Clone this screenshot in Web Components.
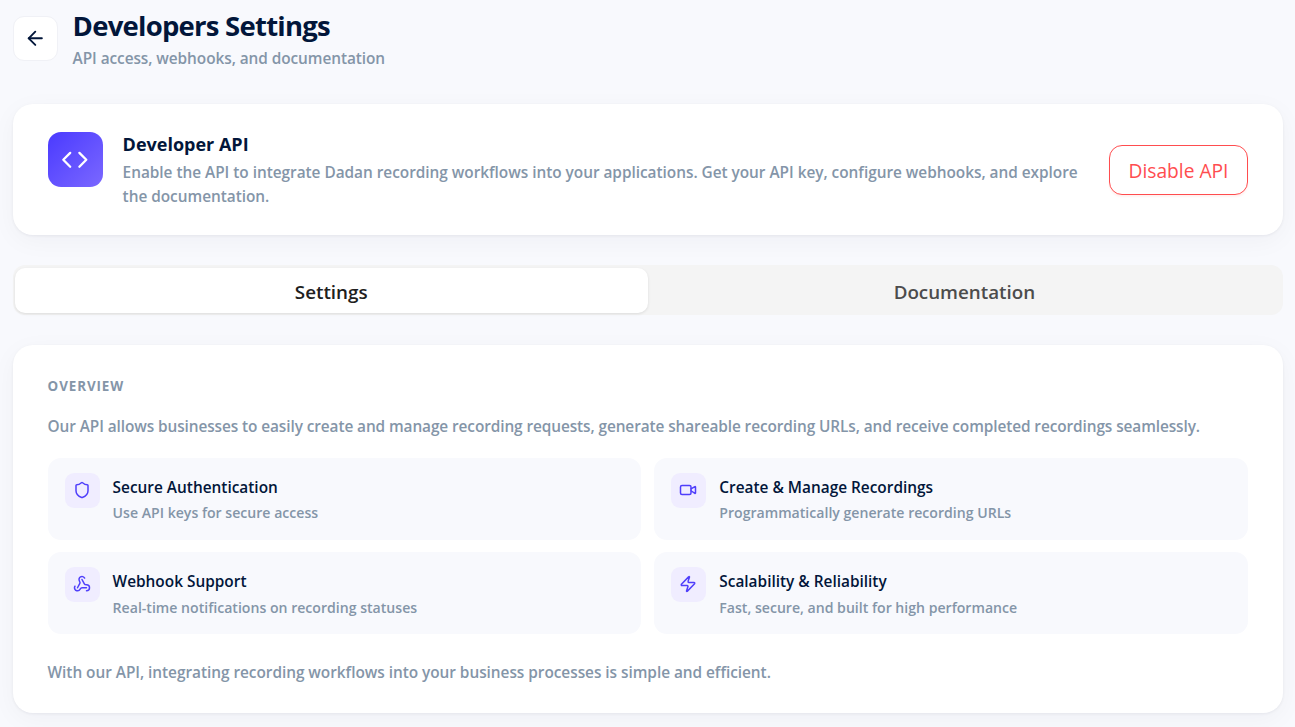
<!DOCTYPE html>
<html lang="en">
<head>
<meta charset="utf-8">
<title>Developers Settings</title>
<style>
  html, body {
    margin: 0;
    height: 100%;
    overflow: hidden;
    background: #f8f9fd;
  }

  body {
    --ink: #02163a;
    --muted: #8495a8;
    --accent: #4f3ffb;
    --danger: #ff4d4f;
    font-family: "Open Sans", "Noto Sans", sans-serif;
    color: var(--ink);
  }
</style>
</head>
<body>
<developer-settings></developer-settings>

<script>
const ICONS = {
  back: '<path d="m12 19-7-7 7-7"/><path d="M19 12H5"/>',
  code: '<path d="m16 18 6-6-6-6"/><path d="m8 6-6 6 6 6"/>',
  shield: '<path d="M20 13c0 5-3.5 7.5-7.66 8.95a1 1 0 0 1-.67-.01C7.5 20.5 4 18 4 13V6a1 1 0 0 1 1-1c2 0 4.5-1.2 6.24-2.72a1.17 1.17 0 0 1 1.52 0C14.51 3.81 17 5 19 5a1 1 0 0 1 1 1z"/>',
  video: '<path d="m16 13 5.223 3.482a.5.5 0 0 0 .777-.416V7.87a.5.5 0 0 0-.752-.432L16 10.5"/><rect x="2" y="6" width="14" height="12" rx="2"/>',
  webhook: '<path d="M18 16.98h-5.99c-1.1 0-1.95.94-2.48 1.9A4 4 0 0 1 2 17c.01-.7.2-1.4.57-2"/><path d="m6 17 3.13-5.78c.53-.97.1-2.18-.5-3.1a4 4 0 1 1 6.89-4.06"/><path d="m12 6 3.13 5.73C15.66 12.7 16.9 13 18 13a4 4 0 0 1 0 8"/>',
  zap: '<path d="M4 14a1 1 0 0 1-.78-1.63l9.9-10.2a.5.5 0 0 1 .86.46l-1.92 6.02A1 1 0 0 0 13 10h7a1 1 0 0 1 .78 1.63l-9.9 10.2a.5.5 0 0 1-.86-.46l1.92-6.02A1 1 0 0 0 11 14z"/>',
};

class UiIcon extends HTMLElement {
  connectedCallback() {
    this.attachShadow({ mode: "open" }).innerHTML = `
      <style>
        :host {
          display: block;
          flex: none;
          width: var(--icon-size, 18px);
          height: var(--icon-size, 18px);
        }

        svg {
          display: block;
          width: 100%;
          height: 100%;
        }
      </style>
      <svg viewBox="0 0 24 24" fill="none" stroke="currentColor" stroke-width="2"
        stroke-linecap="round" stroke-linejoin="round">${ICONS[this.getAttribute("name")]}</svg>
    `;
  }
}

class PageHeader extends HTMLElement {
  connectedCallback() {
    this.attachShadow({ mode: "open" }).innerHTML = `
      <style>
        :host {
          display: flex;
          gap: 15px;
          height: 96px;
          padding-top: 8px;
        }

        button {
          display: grid;
          place-items: center;
          box-sizing: border-box;
          width: 45px;
          height: 45px;
          margin: 8px 0 0;
          padding: 0;
          color: var(--ink);
          background: #fff;
          border: 1px solid #f0f1f6;
          border-radius: 11px;
          --icon-size: 22.6px;
        }

        h1 {
          margin: 0;
          font-size: 27.5px;
          font-weight: 700;
          line-height: 36px;
          letter-spacing: -0.76px;
        }

        p {
          margin: 3px 0 0;
          font-size: 15.4px;
          font-weight: 600;
          line-height: 24px;
          letter-spacing: -0.07px;
          color: var(--muted);
        }
      </style>
      <button aria-label="Back"><ui-icon name="back"></ui-icon></button>
      <div>
        <h1><slot name="title"></slot></h1>
        <p><slot></slot></p>
      </div>
    `;
  }
}

class SurfaceCard extends HTMLElement {
  connectedCallback() {
    this.attachShadow({ mode: "open" }).innerHTML = `
      <style>
        :host {
          display: block;
          box-sizing: border-box;
          background: #fff;
          border-radius: 20px;
          box-shadow: 0 1px 3px rgba(15, 23, 42, 0.06), 0 6px 26px rgba(15, 23, 42, 0.04);
        }
      </style>
      <slot></slot>
    `;
  }
}

class ApiBanner extends HTMLElement {
  connectedCallback() {
    this.attachShadow({ mode: "open" }).innerHTML = `
      <style>
        :host {
          display: flex;
          gap: 20px;
          box-sizing: border-box;
          height: 131px;
          padding: 28px 35px 27px;
        }

        .badge {
          display: grid;
          place-items: center;
          flex: none;
          width: 55px;
          height: 55px;
          color: #fff;
          border-radius: 13px;
          background: linear-gradient(135deg, #4a3aff, #7b68ff);
          --icon-size: 27.6px;
        }

        .copy {
          flex: 1;
          min-width: 0;
        }

        h2 {
          margin: 0;
          font-size: 18px;
          font-weight: 700;
          line-height: 25px;
        }

        p {
          margin: 4px 0 0;
          font-size: 15.4px;
          font-weight: 600;
          line-height: 24px;
          letter-spacing: -0.03px;
          color: var(--muted);
        }

        button {
          align-self: center;
          flex: none;
          box-sizing: border-box;
          width: 139px;
          height: 50px;
          padding: 1px 0 0;
          font: 400 19.2px/1 "Open Sans", "Noto Sans", sans-serif;
          color: var(--danger);
          background: #fff;
          border: 1px solid var(--danger);
          border-radius: 13px;
          box-shadow: 0 2px 2px rgba(255, 38, 5, 0.06);
        }
      </style>
      <div class="badge"><ui-icon name="code"></ui-icon></div>
      <div class="copy">
        <h2><slot name="title"></slot></h2>
        <p><slot></slot></p>
      </div>
      <button><slot name="action"></slot></button>
    `;
  }
}

class TabSwitch extends HTMLElement {
  connectedCallback() {
    const tabs = this.getAttribute("tabs").split(",");
    this.attachShadow({ mode: "open" }).innerHTML = `
      <style>
        :host {
          display: grid;
          grid-template-columns: 1fr 1fr;
          box-sizing: border-box;
          height: 50px;
          margin: 30px 0;
          padding: 3px 2px 2px;
          background: #f4f4f4;
          border-radius: 12px;
        }

        button {
          padding: 3px 0 0;
          font: 600 18.8px/1 "Open Sans", "Noto Sans", sans-serif;
          color: #4c4c4c;
          background: none;
          border: 0;
          border-radius: 10px;
        }

        button.active {
          color: #202020;
          background: #fff;
          box-shadow: 0 1px 3px rgba(0, 0, 0, 0.1);
        }
      </style>
      ${tabs.map((tab, i) => `<button class="${i === 0 ? "active" : ""}">${tab}</button>`).join("")}
    `;
  }
}

class FeatureTile extends HTMLElement {
  connectedCallback() {
    this.attachShadow({ mode: "open" }).innerHTML = `
      <style>
        :host {
          display: flex;
          gap: 13px;
          box-sizing: border-box;
          height: 82px;
          padding: 15px 17px;
          background: #f8f9fd;
          border-radius: 13px;
        }

        .badge {
          flex: none;
          box-sizing: border-box;
          width: 35px;
          height: 35px;
          padding: 8px;
          color: var(--accent);
          background: #f0edff;
          border-radius: 9px;
        }

        h3 {
          margin: 3px 0 0;
          font-size: 15.4px;
          font-weight: 600;
          line-height: 23px;
        }

        p {
          margin: 3.2px 0 0;
          font-size: 14.1px;
          font-weight: 600;
          line-height: 22px;
          color: var(--muted);
        }
      </style>
      <div class="badge"><ui-icon name="${this.getAttribute("icon")}"></ui-icon></div>
      <div>
        <h3><slot name="title"></slot></h3>
        <p><slot></slot></p>
      </div>
    `;
  }
}

class OverviewSection extends HTMLElement {
  connectedCallback() {
    this.attachShadow({ mode: "open" }).innerHTML = `
      <style>
        :host {
          display: block;
          box-sizing: border-box;
          height: 368px;
          padding: 32px 35px 28px;
          color: var(--muted);
        }

        h2 {
          margin: 0;
          font-size: 13.4px;
          font-weight: 700;
          line-height: 18px;
          letter-spacing: 0.9px;
          text-transform: uppercase;
        }

        p {
          margin: 0;
          font-size: 15.4px;
          font-weight: 600;
          line-height: 24px;
          white-space: nowrap;
        }

        .intro {
          margin: 20px 0 19px;
          letter-spacing: -0.095px;
        }

        .grid {
          display: grid;
          grid-template-columns: 1fr 1fr;
          gap: 12.4px 13px;
          margin-bottom: 27px;
          color: var(--ink);
        }

        .outro {
          letter-spacing: -0.04px;
        }
      </style>
      <h2><slot name="title"></slot></h2>
      <p class="intro"><slot name="intro"></slot></p>
      <div class="grid"><slot></slot></div>
      <p class="outro"><slot name="outro"></slot></p>
    `;
  }
}

class DeveloperSettings extends HTMLElement {
  connectedCallback() {
    this.attachShadow({ mode: "open" }).innerHTML = `
      <style>
        :host {
          display: block;
          padding: 0 12px 14px 12.6px;
        }
      </style>
      <page-header>
        <span slot="title">Developers Settings</span>
        API access, webhooks, and documentation
      </page-header>
      <surface-card>
        <api-banner>
          <span slot="title">Developer API</span>
          Enable the API to integrate Dadan recording workflows into your applications. Get your API key, configure webhooks, and explore the documentation.
          <span slot="action">Disable API</span>
        </api-banner>
      </surface-card>
      <tab-switch tabs="Settings,Documentation"></tab-switch>
      <surface-card>
        <overview-section>
          <span slot="title">Overview</span>
          <span slot="intro">Our API allows businesses to easily create and manage recording requests, generate shareable recording URLs, and receive completed recordings seamlessly.</span>
          <feature-tile icon="shield">
            <span slot="title">Secure Authentication</span>
            Use API keys for secure access
          </feature-tile>
          <feature-tile icon="video">
            <span slot="title">Create &amp; Manage Recordings</span>
            Programmatically generate recording URLs
          </feature-tile>
          <feature-tile icon="webhook">
            <span slot="title">Webhook Support</span>
            Real-time notifications on recording statuses
          </feature-tile>
          <feature-tile icon="zap">
            <span slot="title">Scalability &amp; Reliability</span>
            Fast, secure, and built for high performance
          </feature-tile>
          <span slot="outro">With our API, integrating recording workflows into your business processes is simple and efficient.</span>
        </overview-section>
      </surface-card>
    `;
  }
}

customElements.define("ui-icon", UiIcon);
customElements.define("page-header", PageHeader);
customElements.define("surface-card", SurfaceCard);
customElements.define("api-banner", ApiBanner);
customElements.define("tab-switch", TabSwitch);
customElements.define("feature-tile", FeatureTile);
customElements.define("overview-section", OverviewSection);
customElements.define("developer-settings", DeveloperSettings);
</script>
</body>
</html>
